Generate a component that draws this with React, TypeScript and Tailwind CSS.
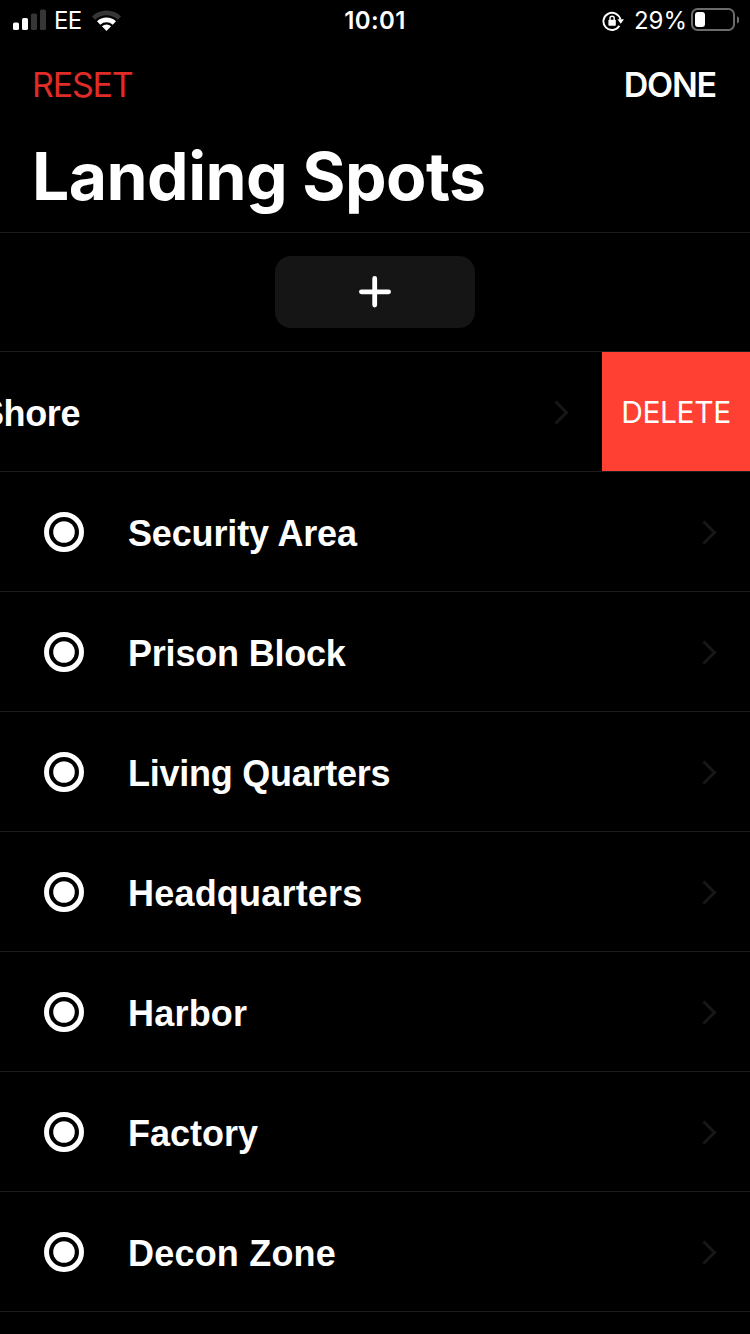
import React, { useState } from 'react';

const initialSpots = [
  { name: 'Shore', tracking: 'tracking-[-0.4px]' },
  { name: 'Security Area', tracking: 'tracking-[-0.15px]' },
  { name: 'Prison Block', tracking: 'tracking-[-0.2px]' },
  { name: 'Living Quarters', tracking: 'tracking-[-0.25px]' },
  { name: 'Headquarters', tracking: 'tracking-[0.2px]' },
  { name: 'Harbor', tracking: 'tracking-[0.2px]' },
  { name: 'Factory', tracking: 'tracking-normal' },
  { name: 'Decon Zone', tracking: 'tracking-[0.2px]' },
];

const StatusBar = () => (
  <div className="grid h-10 grid-cols-3 items-center text-2xl leading-10">
    <div className="flex items-center pl-[13px]">
      <svg className="-mt-px" width="34" height="22" viewBox="0 0 34 22">
        <rect x="0" y="13.5" width="6" height="7.5" rx="1.6" fill="#fff" />
        <rect x="9" y="9" width="6" height="12" rx="1.6" fill="#fff" />
        <rect x="18" y="4.5" width="6" height="16.5" rx="1.6" fill="#363636" />
        <rect x="27" y="0.5" width="6" height="20.5" rx="1.6" fill="#363636" />
      </svg>
      <span className="ml-[7px] w-[27px] pt-px tracking-[-0.8px]">EE</span>
      <svg className="ml-[10px]" width="32" height="24" viewBox="0 0 32 24">
        <path d="M1 7.4a21 21 0 0 1 29 0l-3.2 3.4a16.4 16.4 0 0 0-22.6 0z" fill="#363636" />
        <path d="M6 12.3a14 14 0 0 1 19 0l-3.3 3.4a9.2 9.2 0 0 0-12.4 0z" fill="#fff" />
        <path d="M10.9 17.3a7 7 0 0 1 9.2 0l-4.6 4.7z" fill="#fff" />
      </svg>
    </div>

    <div className="pt-px text-center font-semibold tracking-[0.4px]">10:01</div>

    <div className="flex items-center justify-end pr-[11px]">
      <svg width="22" height="22" viewBox="0 0 22 22">
        <path
          d="M17.4 15.8A8.6 8.6 0 1 1 18.4 9.5"
          fill="none"
          stroke="#fff"
          strokeWidth="1.9"
        />
        <path d="M15.4 9.2h6.6L18.7 13.8z" fill="#fff" />
        <rect x="6.4" y="9.8" width="7.4" height="6" rx="0.8" fill="#fff" />
        <path d="M8 10.2V8.4a2.1 2.1 0 0 1 4.2 0v1.8" fill="none" stroke="#fff" strokeWidth="1.4" />
      </svg>
      <span className="ml-[10px] pt-px">29%</span>
      <svg className="-mt-px ml-[4px]" width="48" height="24" viewBox="0 0 48 24">
        <rect x="1" y="1" width="42" height="21" rx="5.5" fill="none" stroke="#6b6b6b" strokeWidth="2" />
        <rect x="4" y="4" width="10" height="15" rx="3" fill="#fff" />
        <path d="M46 8v7.5a4.2 4.2 0 0 0 0-7.5z" fill="#6b6b6b" />
      </svg>
    </div>
  </div>
);

const Chevron = () => (
  <svg width="15" height="24" viewBox="0 0 15 24" fill="none">
    <path d="M1.5 1.5 L12.5 12.5 L1.5 23.5" stroke="#171717" strokeWidth="3" />
  </svg>
);

const Target = () => (
  <svg width="40" height="40" viewBox="0 0 40 40">
    <circle cx="20" cy="20" r="17.5" fill="none" stroke="#fff" strokeWidth="5" />
    <circle cx="20" cy="20" r="10.8" fill="#fff" />
  </svg>
);

interface SpotRowProps {
  name: string;
  tracking: string;
  swiped: boolean;
  onSwipe: () => void;
  onDelete: () => void;
}

const SpotRow = ({ name, tracking, swiped, onSwipe, onDelete }: SpotRowProps) => (
  <li className="flex h-[120px] justify-end overflow-hidden border-b border-[#1c1c1c]">
    <div className="flex w-[750px] shrink-0 items-center pr-[33px] pl-11" onClick={onSwipe}>
      <span className="flex pt-px">
        <Target />
      </span>
      <span
        className={`ml-11 flex-1 pt-1 font-['Liberation_Sans',sans-serif] text-4xl font-bold ${tracking}`}
      >
        {name}
      </span>
      <Chevron />
    </div>
    {swiped && (
      <button
        className="w-[148px] shrink-0 bg-[#ff4033] pt-px text-[30px] tracking-[-0.4px] text-white"
        onClick={onDelete}
      >
        DELETE
      </button>
    )}
  </li>
);

const App = () => {
  const [spots, setSpots] = useState(initialSpots);
  const [swiped, setSwiped] = useState<string | null>('Shore');

  return (
    <div className="flex h-[1334px] w-[750px] flex-col overflow-hidden bg-black font-[Inter,sans-serif] text-white">
      <StatusBar />

      <header className="h-[193px] border-b border-[#1c1c1c] px-8">
        <div className="flex h-[88px] items-center justify-between text-[34px]">
          <button className="tracking-[-1.2px] text-[#e02b26]" onClick={() => setSpots(initialSpots)}>
            RESET
          </button>
          <button className="pr-0.5 font-semibold tracking-[-1.2px]" onClick={() => setSwiped(null)}>
            DONE
          </button>
        </div>
        <h1 className="text-[66px] leading-[96px] font-bold tracking-[-0.55px]">Landing Spots</h1>
      </header>

      <div className="flex h-[119px] shrink-0 items-center justify-center border-b border-[#1c1c1c]">
        <button className="flex h-[72px] w-[200px] items-center justify-center rounded-2xl bg-[#151515]">
          <svg width="32" height="32" viewBox="0 0 32 32">
            <path d="M15.7 2.4v26.6M2.4 15.8h27.2" stroke="#fff" strokeWidth="4.8" strokeLinecap="round" />
          </svg>
        </button>
      </div>

      <ul>
        {spots.map((spot) => (
          <SpotRow
            key={spot.name}
            name={spot.name}
            tracking={spot.tracking}
            swiped={swiped === spot.name}
            onSwipe={() => setSwiped(swiped === spot.name ? null : spot.name)}
            onDelete={() => setSpots(spots.filter((s) => s.name !== spot.name))}
          />
        ))}
      </ul>
    </div>
  );
};

export default App;
